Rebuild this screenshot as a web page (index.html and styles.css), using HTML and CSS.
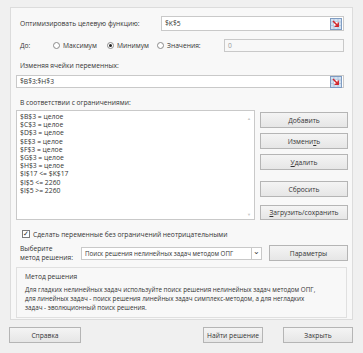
FILE: index.html
```html
<!DOCTYPE html>
<html lang="ru">
<head>
    <meta charset="UTF-8">
    <link rel="stylesheet" href="styles.css">
    <title>Параметры поиска решения</title>
</head>
<body>
    <div class="window">
        <div class="panel">
            <div class="row row-target">
                <span class="label target-label">Оптимизировать целевую функцию:</span>
                <div class="field field-target">
                    <span class="field-text">$K$5</span>
                    <svg class="picker" viewBox="0 0 12 12"><rect x="0.5" y="0.5" width="11" height="11" fill="#d3e1f1" stroke="#7f9cc2"/><path d="M1 4h10M1 7.5h10M4 1v10M8 1v10" stroke="#9fb6d4" stroke-width="0.6"/><rect x="3.5" y="3.5" width="5" height="5" fill="#ffffff" stroke="#9fb6d4" stroke-width="0.5"/><path d="M3 3l5 5M8.2 4.6V8.2H4.6" stroke="#d0262b" stroke-width="1.5" fill="none"/></svg>
                </div>
            </div>

            <div class="row row-to">
                <span class="label to-label">До:</span>
                <label class="radio radio-max"><span class="circle"></span>Максимум</label>
                <label class="radio radio-min"><span class="circle checked"></span>Минимум</label>
                <label class="radio radio-val"><span class="circle"></span>Значения:</label>
                <div class="field field-value"><span class="field-text muted">0</span></div>
            </div>

            <div class="caption caption-vars">Изменяя ячейки переменных:</div>
            <div class="field field-vars">
                <span class="field-text">$B$3:$H$3</span>
                <svg class="picker" viewBox="0 0 12 12"><rect x="0.5" y="0.5" width="11" height="11" fill="#d3e1f1" stroke="#7f9cc2"/><path d="M1 4h10M1 7.5h10M4 1v10M8 1v10" stroke="#9fb6d4" stroke-width="0.6"/><rect x="3.5" y="3.5" width="5" height="5" fill="#ffffff" stroke="#9fb6d4" stroke-width="0.5"/><path d="M3 3l5 5M8.2 4.6V8.2H4.6" stroke="#d0262b" stroke-width="1.5" fill="none"/></svg>
            </div>

            <div class="caption caption-limits">В соответствии с ограничениями:</div>
            <div class="limits">
                <div class="list">
                    <div class="list-items">
                        <div>$B$3 = целое</div>
                        <div>$C$3 = целое</div>
                        <div>$D$3 = целое</div>
                        <div>$E$3 = целое</div>
                        <div>$F$3 = целое</div>
                        <div>$G$3 = целое</div>
                        <div>$H$3 = целое</div>
                        <div>$I$17 &lt;= $K$17</div>
                        <div>$I$5 &lt;= 2260</div>
                        <div>$I$5 &gt;= 2260</div>
                    </div>
                    <div class="scroll">
                        <span class="arrow">&#9650;</span>
                        <span class="arrow">&#9660;</span>
                    </div>
                </div>
                <div class="side-buttons">
                    <button class="btn"><u>Д</u>обавить</button>
                    <button class="btn">Измени<u>т</u>ь</button>
                    <button class="btn btn-delete"><u>У</u>далить</button>
                    <button class="btn btn-reset">Сбросить</button>
                    <button class="btn btn-load"><u>З</u>агрузить/сохранить</button>
                </div>
            </div>

            <label class="check-row">
                <span class="checkbox">&#10003;</span>
                Сделать переменные без ограничений неотрицательными
            </label>

            <div class="row row-method">
                <span class="label method-label">Выберите<br>метод решения:</span>
                <div class="select">
                    <span class="field-text">Поиск решения нелинейных задач методом ОПГ</span>
                    <span class="select-arrow">&#8964;</span>
                </div>
                <button class="btn btn-params">Параметры</button>
            </div>

            <div class="group">
                <div class="group-title">Метод решения</div>
                <p class="group-text">Для гладких нелинейных задач используйте поиск решения нелинейных задач методом ОПГ,<br>для линейных задач - поиск решения линейных задач симплекс-методом, а для негладких<br>задач - эволюционный поиск решения.</p>
            </div>
        </div>

        <div class="footer">
            <button class="btn btn-foot">Справка</button>
            <div class="footer-right">
                <button class="btn btn-foot btn-solve">Найти решение</button>
                <button class="btn btn-foot btn-close">Закрыть</button>
            </div>
        </div>
    </div>
</body>
</html>
```

FILE: styles.css
```css
body {
    margin: 0;
    width: 363px;
    height: 353px;
    background-color: #f0f0f0;
    font-family: 'Open Sans', 'Noto Sans', sans-serif;
    font-size: 6.7px;
    color: #333333;
    overflow: hidden;
}

.window {
    padding: 7px 10px 0 10px;
}

.panel {
    height: 303px;
    width: 336px;
    border: 1px solid #dcdcdc;
    background-color: #f8f8f8;
    padding: 8px 0 0 5px;
}

.row {
    display: flex;
    align-items: center;
}

.label {
    padding-left: 4px;
}

.field {
    display: flex;
    align-items: center;
    justify-content: space-between;
    background-color: #ffffff;
    border: 1px solid #c9c9c9;
    box-sizing: border-box;
    padding: 0 1px 0 3px;
}

.field-text {
    white-space: nowrap;
}

.muted {
    color: #999999;
}

.picker {
    width: 12px;
    height: 12px;
}

.row-target {
    height: 15px;
}

.target-label {
    width: 141px;
}

.field-target {
    width: 183px;
    height: 15px;
}

.row-to {
    margin-top: 8px;
    height: 13px;
}

.to-label {
    width: 33px;
}

.radio {
    display: flex;
    align-items: center;
    gap: 3px;
}

.radio-max {
    width: 54px;
}

.radio-min {
    width: 50px;
}

.radio-val {
    width: 67px;
}

.circle {
    width: 7px;
    height: 7px;
    border: 1px solid #8a8a8a;
    border-radius: 50%;
    background-color: #ffffff;
    box-sizing: border-box;
    position: relative;
}

.circle.checked::after {
    content: "";
    position: absolute;
    left: 1px;
    top: 1px;
    width: 3px;
    height: 3px;
    border-radius: 50%;
    background-color: #222222;
}

.field-value {
    width: 120px;
    height: 13px;
    background-color: #f8f8f8;
}

.caption {
    height: 10px;
    line-height: 10px;
    padding-left: 4px;
}

.caption-vars {
    margin-top: 9px;
}

.field-vars {
    margin-top: 4px;
    width: 328px;
    height: 13px;
}

.caption-limits {
    margin-top: 10px;
}

.limits {
    display: flex;
    margin-top: 2px;
}

.list {
    width: 239px;
    height: 110px;
    background-color: #ffffff;
    border: 1px solid #c9c9c9;
    box-sizing: border-box;
    display: flex;
    justify-content: space-between;
}

.list-items {
    padding: 2px 0 0 3px;
    line-height: 8.2px;
    font-size: 6.8px;
}

.scroll {
    width: 10px;
    display: flex;
    flex-direction: column;
    justify-content: space-between;
    align-items: center;
    padding: 5px 0 2px 0;
}

.arrow {
    font-size: 4px;
    color: #c8c8c8;
}

.side-buttons {
    margin-left: 5px;
    display: flex;
    flex-direction: column;
    padding-top: 2px;
}

.btn {
    font-family: 'Open Sans', 'Noto Sans', sans-serif;
    font-size: 6.7px;
    color: #333333;
    background: linear-gradient(#f4f4f4, #e6e6e6);
    border: 1px solid #b5b5b5;
    padding: 0;
    width: 88px;
    height: 16px;
    margin-bottom: 5px;
}

.btn u {
    text-decoration-thickness: 0.5px;
}

.btn-delete {
    margin-bottom: 11px;
}

.btn-reset {
    margin-bottom: 8px;
}

.btn-load {
    height: 15px;
}

.check-row {
    display: flex;
    align-items: center;
    gap: 3px;
    height: 10px;
    margin-top: 4px;
    padding-left: 6px;
}

.checkbox {
    width: 8px;
    height: 8px;
    border: 1px solid #7a7a7a;
    background-color: #ffffff;
    box-sizing: border-box;
    font-size: 7px;
    line-height: 6px;
    text-align: center;
    color: #222222;
}

.row-method {
    margin-top: 6px;
    height: 16px;
}

.method-label {
    width: 61px;
    line-height: 9px;
}

.select {
    width: 181px;
    height: 13px;
    display: flex;
    align-items: center;
    justify-content: space-between;
    background-color: #ffffff;
    border: 1px solid #c9c9c9;
    box-sizing: border-box;
    padding-left: 3px;
    font-size: 6.2px;
}

.select-arrow {
    width: 9px;
    height: 11px;
    border-left: 1px solid #c9c9c9;
    text-align: center;
    line-height: 6px;
    font-size: 8px;
}

.btn-params {
    margin: 0 0 0 7px;
    width: 79px;
}

.group {
    margin-top: 6px;
    width: 331px;
    height: 51px;
    border: 1px solid #e0e0e0;
    box-sizing: border-box;
    padding: 4px 0 0 8px;
}

.group-title {
    line-height: 10px;
}

.group-text {
    margin: 3px 0 0 0;
    line-height: 9px;
    font-size: 6.3px;
    white-space: nowrap;
}

.footer {
    display: flex;
    justify-content: space-between;
    margin-top: 7px;
    margin-left: -1px;
}

.btn-foot {
    width: 72px;
    margin: 0;
}

.footer-right {
    display: flex;
    gap: 20px;
}

.btn-solve {
    width: 60px;
}

.btn-close {
    width: 70px;
}
```
